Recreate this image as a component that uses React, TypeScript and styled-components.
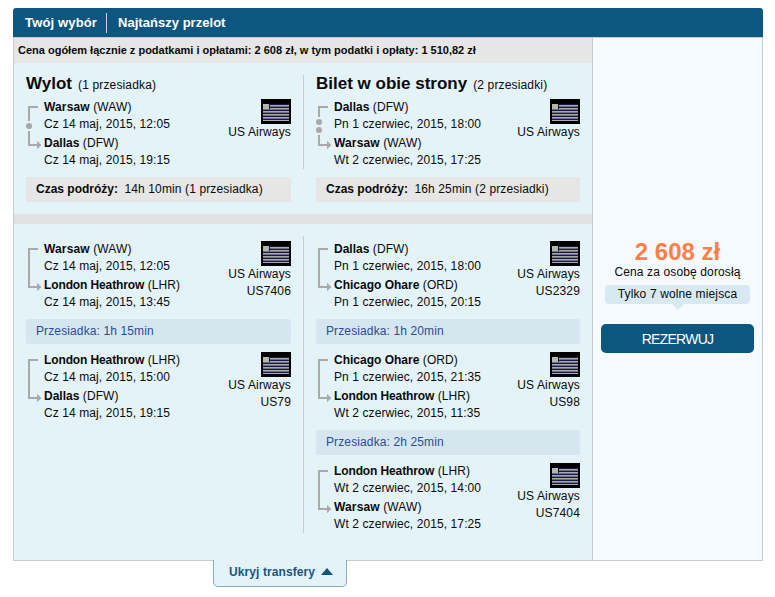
import React from 'react';
import styled, { createGlobalStyle } from 'styled-components';

const GlobalStyle = createGlobalStyle`
  * { box-sizing: border-box; }
  body { margin: 0; background: #fff; }
  #root { font: 12px/17px "Liberation Sans", Arial, sans-serif; color: #0a0a0a; }
`;

const Page = styled.main`
  display: flex;
  flex-direction: column;
  width: 775px;
  padding: 8px 12px 0 13px;
`;
const Header = styled.header`
  display: flex;
  align-items: center;
  height: 29px;
  padding-left: 12px;
  border-radius: 3px 3px 0 0;
  background: #0d5680;
  color: #fff;
  font-size: 13px;
  font-weight: bold;
`;
const HeaderItem = styled.span<{ $spacing: number }>`
  letter-spacing: ${p => p.$spacing}px;
  white-space: nowrap;
  & + & {
    margin-left: 9px;
    padding-left: 11px;
    border-left: 1px solid #c9d5dc;
    line-height: 20px;
  }
`;
const Card = styled.section`
  display: flex;
  height: 524px;
  border: 1px solid #c8cacb;
`;
const Itinerary = styled.div`
  width: 578px;
  background: #e4f3f7;
`;
const TotalBar = styled.div`
  height: 25px;
  padding-left: 4px;
  background: #e6e6e6;
  font-size: 11px;
  font-weight: bold;
  line-height: 24px;
  white-space: nowrap;
`;
const Columns = styled.div<{ $height: number }>`
  display: flex;
  height: ${p => p.$height}px;
  padding-top: 12px;
`;
const Column = styled.div`
  flex: 0 0 289px;
  padding: 0 12px;
`;
const Rule = styled.div<{ $height: number }>`
  width: 1px;
  height: ${p => p.$height}px;
  background: #c8cacb;
  & + ${Column} { flex-basis: 288px; }
`;
const Separator = styled.div`
  height: 10px;
  background: #e2e2e2;
`;
const Heading = styled.h2`
  display: flex;
  align-items: baseline;
  height: 23px;
  margin: 0;
  font-size: 17px;
  line-height: 18px;
  white-space: nowrap;
`;
const Stops = styled.span`
  margin-left: 6px;
  font-size: 12px;
  font-weight: normal;
  letter-spacing: 0.15px;
`;
const LegRow = styled.div<{ $top?: number }>`
  display: flex;
  height: 70px;
  margin-top: ${p => p.$top ?? 0}px;
`;
const Times = styled.div`
  flex: 1;
  margin-left: 3px;
  padding-top: 1px;
  letter-spacing: 0.09px;
  white-space: nowrap;
`;
const Stop = styled.div`
  height: 34px;
  & + & { margin-top: 2px; }
`;
const City = styled.b<{ $spacing: number }>`
  letter-spacing: ${p => p.$spacing}px;
`;
const Carrier = styled.div`
  display: flex;
  flex-direction: column;
  align-items: flex-end;
  padding-top: 1px;
  letter-spacing: 0.15px;
`;
const DurationBox = styled.div`
  height: 25px;
  margin-top: 9px;
  padding-left: 10px;
  background: #e6e6e6;
  letter-spacing: 0.12px;
  line-height: 24px;
  b { margin-right: 3px; letter-spacing: 0; }
`;
const LayoverBox = styled.div`
  height: 25px;
  margin: 9px 0 7px;
  padding-left: 10px;
  border-radius: 3px;
  background: #d5e6ee;
  color: #2d4b9b;
  letter-spacing: 0.12px;
  line-height: 24px;
`;

const Booking = styled.aside`
  display: flex;
  flex: 1;
  flex-direction: column;
  align-items: center;
  padding-top: 202px;
  border-left: 1px solid #c8cacb;
  background: #f4fafd;
`;
const Price = styled.strong`
  color: #ff7e48;
  font-size: 24px;
  line-height: 24px;
`;
const PerAdult = styled.span`
  letter-spacing: 0.13px;
  line-height: 16px;
`;
const SeatsLeft = styled.div`
  width: 145px;
  height: 19px;
  margin-top: 5px;
  border-radius: 4px;
  background: #d9e9f1;
  letter-spacing: 0.13px;
  line-height: 18px;
  text-align: center;
`;
const SeatsPointer = styled.div`
  width: 0;
  border: 6px solid transparent;
  border-top-color: #d9e9f1;
  border-bottom: 0;
`;
const ReserveButton = styled.button`
  width: 153px;
  height: 29px;
  margin-top: 14px;
  padding: 1px 0 0;
  border: 0;
  border-radius: 5px;
  background: #0d5680;
  color: #fff;
  font: 14px "Liberation Sans", Arial, sans-serif;
  letter-spacing: -0.75px;
`;
const ToggleTab = styled.button`
  display: flex;
  align-items: center;
  gap: 6px;
  width: 134px;
  height: 27px;
  margin: -1px 0 0 200px;
  padding: 0 0 3px 15px;
  border: 1px solid #80b0c8;
  border-top: 0;
  border-radius: 0 0 5px 5px;
  background: #e4f3f7;
  color: #1b5583;
  font: bold 12px "Liberation Sans", Arial, sans-serif;
  letter-spacing: 0.09px;
  white-space: nowrap;
`;

function Flag() {
  return (
    <svg width="30" height="25" shapeRendering="crispEdges">
      <rect width="30" height="25" fill="#000" />
      <rect x="2" y="5" width="26" height="17" fill="#1b1943" />
      {[6, 9, 12, 15, 18].map(y => (
        <g key={y}>
          <rect x="2" y={y} width="26" height="1" fill="#a5aaa9" />
          <rect x="2" y={y + 1} width="26" height="1" fill="#6e7085" />
        </g>
      ))}
      <rect x="2" y="21" width="26" height="1" fill="#a5aaa9" />
      <rect x="2" y="5" width="6" height="5" fill="#afb9a7" />
      <rect x="8" y="5" width="1" height="5" fill="#15133c" />
    </svg>
  );
}

function RouteMark({ dots }: { dots: number }) {
  const path =
    dots === 0 ? 'M12 9H3V47H12' : dots === 1 ? 'M12 9H3V23M3 33V47H12' : 'M12 9H3V19M3 37V47H12';
  const centers = dots === 1 ? [28] : dots === 2 ? [24, 32] : [];
  return (
    <svg width="15" height="70">
      <path d={path} fill="none" stroke="#a9a9a9" strokeWidth="2" />
      <path d="M11 42.7L15.3 47L11 51.3Z" fill="#a9a9a9" />
      {centers.map(y => (
        <circle key={y} cx="3" cy={y} r="3.1" fill="#a9a9a9" />
      ))}
    </svg>
  );
}

type Point = { city: string; code: string; time: string };
type LegData = { from: Point; to: Point; flight?: string };

const pt = (city: string, code: string, time: string): Point => ({ city, code, time });

const citySpacing: Record<string, number> = {
  Warsaw: 0.15,
  'London Heathrow': -0.12,
};

function StopLines({ city, code, time }: Point) {
  return (
    <Stop>
      <div><City $spacing={citySpacing[city] ?? 0}>{city}</City> ({code})</div>
      <div>{time}</div>
    </Stop>
  );
}

function Leg({ from, to, flight, dots = 0, top }: LegData & { dots?: number; top?: number }) {
  return (
    <LegRow $top={top}>
      <RouteMark dots={dots} />
      <Times>
        <StopLines {...from} />
        <StopLines {...to} />
      </Times>
      <Carrier>
        <Flag />
        <span>US Airways</span>
        {flight && <span>{flight}</span>}
      </Carrier>
    </LegRow>
  );
}

function Summary({ title, stops, duration, leg, dots }: {
  title: string; stops: string; duration: string; leg: LegData; dots: number;
}) {
  return (
    <Column>
      <Heading>{title}<Stops>({stops})</Stops></Heading>
      <Leg {...leg} dots={dots} />
      <DurationBox><b>Czas podróży:</b> {duration} ({stops})</DurationBox>
    </Column>
  );
}

function Segments({ legs, layovers }: { legs: LegData[]; layovers: string[] }) {
  return (
    <Column>
      {legs.map((leg, i) => (
        <React.Fragment key={leg.flight}>
          {i > 0 && <LayoverBox>Przesiadka: {layovers[i - 1]}</LayoverBox>}
          <Leg {...leg} top={i === 0 ? 4 : 0} />
        </React.Fragment>
      ))}
    </Column>
  );
}

const outbound: LegData[] = [
  { from: pt('Warsaw', 'WAW', 'Cz 14 maj, 2015, 12:05'), to: pt('London Heathrow', 'LHR', 'Cz 14 maj, 2015, 13:45'), flight: 'US7406' },
  { from: pt('London Heathrow', 'LHR', 'Cz 14 maj, 2015, 15:00'), to: pt('Dallas', 'DFW', 'Cz 14 maj, 2015, 19:15'), flight: 'US79' },
];
const inbound: LegData[] = [
  { from: pt('Dallas', 'DFW', 'Pn 1 czerwiec, 2015, 18:00'), to: pt('Chicago Ohare', 'ORD', 'Pn 1 czerwiec, 2015, 20:15'), flight: 'US2329' },
  { from: pt('Chicago Ohare', 'ORD', 'Pn 1 czerwiec, 2015, 21:35'), to: pt('London Heathrow', 'LHR', 'Wt 2 czerwiec, 2015, 11:35'), flight: 'US98' },
  { from: pt('London Heathrow', 'LHR', 'Wt 2 czerwiec, 2015, 14:00'), to: pt('Warsaw', 'WAW', 'Wt 2 czerwiec, 2015, 17:25'), flight: 'US7404' },
];

export default function App() {
  return (
    <>
      <GlobalStyle />
      <Page>
        <Header>
          <HeaderItem $spacing={0.15}>Twój wybór</HeaderItem>
          <HeaderItem $spacing={0.03}>Najtańszy przelot</HeaderItem>
        </Header>
        <Card>
          <Itinerary>
            <TotalBar>
              Cena ogółem łącznie z podatkami i opłatami: 2 608 zł, w tym podatki i opłaty: 1 510,82 zł
            </TotalBar>
            <Columns $height={151}>
              <Summary
                title="Wylot" stops="1 przesiadka" duration="14h 10min" dots={1}
                leg={{ from: outbound[0].from, to: outbound[1].to }}
              />
              <Rule $height={94} />
              <Summary
                title="Bilet w obie strony" stops="2 przesiadki" duration="16h 25min" dots={2}
                leg={{ from: inbound[0].from, to: inbound[2].to }}
              />
            </Columns>
            <Separator />
            <Columns $height={336}>
              <Segments legs={outbound} layovers={['1h 15min']} />
              <Rule $height={297} />
              <Segments legs={inbound} layovers={['1h 20min', '2h 25min']} />
            </Columns>
          </Itinerary>
          <Booking>
            <Price>2 608 zł</Price>
            <PerAdult>Cena za osobę dorosłą</PerAdult>
            <SeatsLeft>Tylko 7 wolne miejsca</SeatsLeft>
            <SeatsPointer />
            <ReserveButton>REZERWUJ</ReserveButton>
          </Booking>
        </Card>
        <ToggleTab>
          Ukryj transfery
          <svg width="12" height="7"><path d="M0 7L6 0L12 7Z" fill="#0d5680" /></svg>
        </ToggleTab>
      </Page>
    </>
  );
}
